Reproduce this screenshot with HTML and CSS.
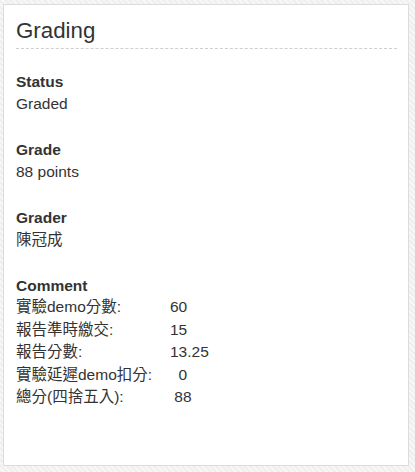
FILE: index.html
```html
<!DOCTYPE html>
<html lang="zh-Hant">
<head>
<meta charset="utf-8">
<title>Grading</title>
<link rel="stylesheet" href="styles.css">
</head>
<body>
<section class="card">
  <h3 class="card-title">Grading</h3>
  <div class="fields">
    <div class="field">
      <div class="field-label">Status</div>
      <div class="field-value">Graded</div>
    </div>
    <div class="field">
      <div class="field-label">Grade</div>
      <div class="field-value">88 points</div>
    </div>
    <div class="field">
      <div class="field-label">Grader</div>
      <div class="field-value">陳冠成</div>
    </div>
    <div class="field">
      <div class="field-label">Comment</div>
      <div class="comment">
        <span class="c-label">實驗demo分數:</span><span class="c-value">60</span>
        <span class="c-label">報告準時繳交:</span><span class="c-value">15</span>
        <span class="c-label">報告分數:</span><span class="c-value">13.25</span>
        <span class="c-label">實驗延遲demo扣分:</span><span class="c-value">  0</span>
        <span class="c-label">總分(四捨五入):</span><span class="c-value"> 88</span>
      </div>
    </div>
  </div>
</section>
</body>
</html>
```

FILE: styles.css
```css
html, body {
  margin: 0;
  padding: 0;
}

body {
  width: 415px;
  height: 472px;
  overflow: hidden;
  font-family: "Liberation Sans", Arial, "Noto Sans CJK TC", sans-serif;
  font-size: 15.5px;
  line-height: 22px;
  color: #333;
  background-color: #f3f3f3;
  background-image: repeating-linear-gradient(45deg, #efefef 0 2px, #f7f7f7 2px 4px);
  padding-top: 4px;
  padding-left: 3px;
  box-sizing: border-box;
}

.card {
  box-sizing: border-box;
  width: 406px;
  height: 462px;
  background: #fff;
  border: 1px solid #dcdcdc;
  padding: 14px 11px 0 12px;
}

.card-title {
  margin: 0;
  font-size: 22.3px;
  font-weight: normal;
  line-height: 24px;
  padding-bottom: 5px;
  border-bottom: 1px dashed #cfcfcf;
}

.fields {
  display: flex;
  flex-direction: column;
  gap: 24px;
  margin-top: 22px;
}

.field-label {
  font-weight: bold;
  height: 22px;
}

.field-value {
  height: 22px;
}

.comment {
  display: grid;
  grid-template-columns: 154px auto;
  grid-auto-rows: 22.5px;
  align-items: baseline;
  line-height: 20px;
}

.c-value {
  white-space: pre;
}
```
